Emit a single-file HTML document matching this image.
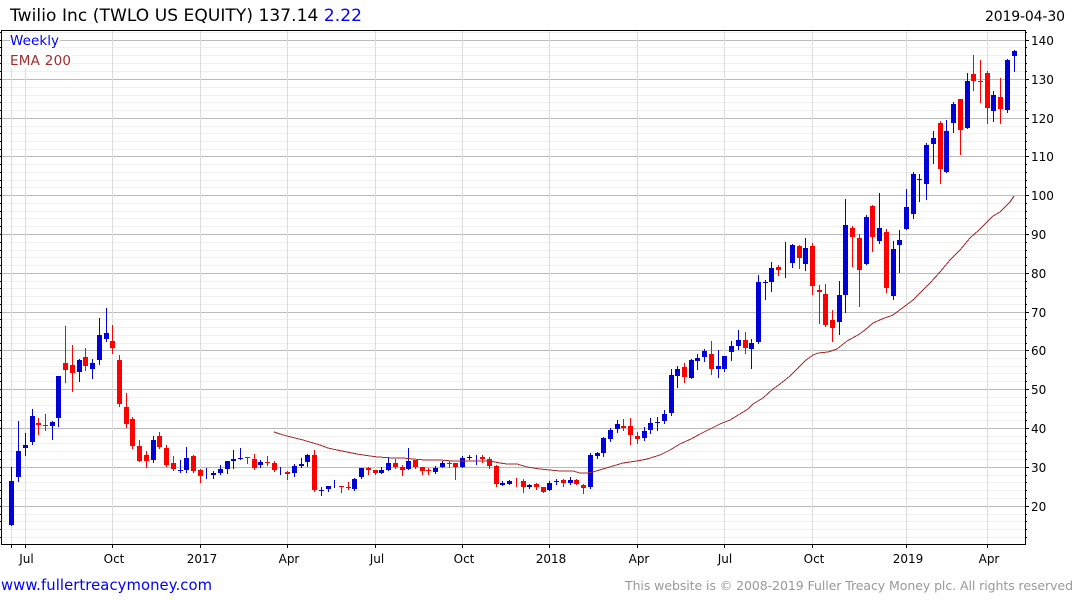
<!DOCTYPE html>
<html><head><meta charset="utf-8"><style>
html,body{margin:0;padding:0;background:#fff;width:1075px;height:600px;overflow:hidden}
svg{display:block}
text{font-family:"DejaVu Sans",sans-serif}
</style></head><body>
<svg width="1075" height="600" viewBox="0 0 1075 600" xmlns="http://www.w3.org/2000/svg">
<g shape-rendering="crispEdges" fill="none">
<path stroke="#f0f0f0" d="M2 32.5H1025M2 47.5H1025M2 55.5H1025M2 63.5H1025M2 71.5H1025M2 87.5H1025M2 95.5H1025M2 102.5H1025M2 110.5H1025M2 126.5H1025M2 133.5H1025M2 141.5H1025M2 149.5H1025M2 164.5H1025M2 172.5H1025M2 180.5H1025M2 187.5H1025M2 203.5H1025M2 211.5H1025M2 218.5H1025M2 226.5H1025M2 242.5H1025M2 250.5H1025M2 257.5H1025M2 265.5H1025M2 281.5H1025M2 288.5H1025M2 296.5H1025M2 304.5H1025M2 319.5H1025M2 327.5H1025M2 335.5H1025M2 343.5H1025M2 358.5H1025M2 366.5H1025M2 373.5H1025M2 381.5H1025M2 397.5H1025M2 405.5H1025M2 412.5H1025M2 420.5H1025M2 436.5H1025M2 443.5H1025M2 451.5H1025M2 459.5H1025M2 475.5H1025M2 482.5H1025M2 490.5H1025M2 498.5H1025M2 514.5H1025M2 521.5H1025M2 529.5H1025M2 537.5H1025"/>
<path stroke="#bbbbbb" d="M2 40.5H1025M2 79.5H1025M2 118.5H1025M2 156.5H1025M2 195.5H1025M2 234.5H1025M2 273.5H1025M2 312.5H1025M2 350.5H1025M2 389.5H1025M2 428.5H1025M2 467.5H1025M2 506.5H1025"/>
<path stroke="#dddddd" d="M11.5 31V544M25.5 31V544M112.5 31V544M200.5 31V544M287.5 31V544M375.5 31V544M462.5 31V544M549.5 31V544M637.5 31V544M724.5 31V544M812.5 31V544M906.5 31V544M987.5 31V544"/>
<rect x="10" y="33" width="50" height="15" fill="#fff"/>
<rect x="10" y="49" width="62" height="19" fill="#fff"/>
<path stroke="#000" d="M1.5 30V545M1 30.5H1026M1 544.5H1026M1025.5 30V545"/>
<path stroke="#000" d="M0 32.5H1M0 40.5H1M0 47.5H1M0 55.5H1M0 63.5H1M0 71.5H1M0 79.5H1M0 87.5H1M0 95.5H1M0 102.5H1M0 110.5H1M0 118.5H1M0 126.5H1M0 133.5H1M0 141.5H1M0 149.5H1M0 156.5H1M0 164.5H1M0 172.5H1M0 180.5H1M0 187.5H1M0 195.5H1M0 203.5H1M0 211.5H1M0 218.5H1M0 226.5H1M0 234.5H1M0 242.5H1M0 250.5H1M0 257.5H1M0 265.5H1M0 273.5H1M0 281.5H1M0 288.5H1M0 296.5H1M0 304.5H1M0 312.5H1M0 319.5H1M0 327.5H1M0 335.5H1M0 343.5H1M0 350.5H1M0 358.5H1M0 366.5H1M0 373.5H1M0 381.5H1M0 389.5H1M0 397.5H1M0 405.5H1M0 412.5H1M0 420.5H1M0 428.5H1M0 436.5H1M0 443.5H1M0 451.5H1M0 459.5H1M0 467.5H1M0 475.5H1M0 482.5H1M0 490.5H1M0 498.5H1M0 506.5H1M0 514.5H1M0 521.5H1M0 529.5H1M0 537.5H1"/>
<path stroke="#000" d="M1026 32.5H1027M1026 47.5H1027M1026 55.5H1027M1026 63.5H1027M1026 71.5H1027M1026 87.5H1027M1026 95.5H1027M1026 102.5H1027M1026 110.5H1027M1026 126.5H1027M1026 133.5H1027M1026 141.5H1027M1026 149.5H1027M1026 164.5H1027M1026 172.5H1027M1026 180.5H1027M1026 187.5H1027M1026 203.5H1027M1026 211.5H1027M1026 218.5H1027M1026 226.5H1027M1026 242.5H1027M1026 250.5H1027M1026 257.5H1027M1026 265.5H1027M1026 281.5H1027M1026 288.5H1027M1026 296.5H1027M1026 304.5H1027M1026 319.5H1027M1026 327.5H1027M1026 335.5H1027M1026 343.5H1027M1026 358.5H1027M1026 366.5H1027M1026 373.5H1027M1026 381.5H1027M1026 397.5H1027M1026 405.5H1027M1026 412.5H1027M1026 420.5H1027M1026 436.5H1027M1026 443.5H1027M1026 451.5H1027M1026 459.5H1027M1026 475.5H1027M1026 482.5H1027M1026 490.5H1027M1026 498.5H1027M1026 514.5H1027M1026 521.5H1027M1026 529.5H1027M1026 537.5H1027M1026 40.5H1029M1026 79.5H1029M1026 118.5H1029M1026 156.5H1029M1026 195.5H1029M1026 234.5H1029M1026 273.5H1029M1026 312.5H1029M1026 350.5H1029M1026 389.5H1029M1026 428.5H1029M1026 467.5H1029M1026 506.5H1029"/>
<path stroke="#000" d="M11.5 545V548M25.5 545V548M112.5 545V548M200.5 545V548M287.5 545V548M375.5 545V548M462.5 545V548M549.5 545V548M637.5 545V548M724.5 545V548M812.5 545V548M906.5 545V548M987.5 545V548"/>
<!-- blue wicks -->
<path stroke="#0000d8" stroke-width="1" d="M11.5 467V526M18.5 421V482M25.5 433V456M32.5 409V445M52.5 421V440M58.5 376V427M79.5 359V382M92.5 359V379M99.5 318V365M106.5 308V342M153.5 436V463M180.5 460V473M186.5 447V473M206.5 468V479M213.5 471V479M220.5 465V475M227.5 461V474M233.5 450V469M240.5 448V460M260.5 460V468M280.5 467V475M294.5 464V477M301.5 458V468M307.5 454V467M321.5 487V496M328.5 486V492M334.5 480V488M354.5 478V491M361.5 468V479M381.5 467V474M388.5 458V471M408.5 448V470M435.5 466V474M442.5 461V468M462.5 456V468M469.5 455V460M476.5 455V465M502.5 481V486M509.5 480V485M529.5 484V489M549.5 481V491M556.5 479V485M570.5 477V485M590.5 453V489M597.5 452V459M603.5 437V457M610.5 428V442M617.5 420V433M644.5 427V441M650.5 418V434M657.5 417V431M664.5 410V424M671.5 369V416M677.5 366V388M691.5 359V379M697.5 354V370M704.5 349V362M718.5 350V378M724.5 356V372M731.5 341V361M738.5 330V350M751.5 339V369M758.5 275V344M765.5 280V300M771.5 262V292M785.5 242V278M792.5 244V268M805.5 238V271M839.5 281V335M845.5 199V313M866.5 215V265M879.5 193V244M893.5 241V300M899.5 230V273M906.5 189V230M913.5 172V219M919.5 174V202M926.5 143V200M933.5 131V164M946.5 120V173M953.5 102V133M967.5 73V129M993.5 91V122M1007.5 59V113M1014.5 50V72"/>
<!-- blue bodies -->
<path stroke="#0000d8" stroke-width="5" d="M11.5 481V525M18.5 451V477M25.5 445V448M32.5 416V442M52.5 422V426M58.5 376V418M79.5 360V372M92.5 363V369M99.5 335V360M106.5 333V339M153.5 440V460M180.5 470V471M186.5 458V470M213.5 473V475M220.5 469V473M227.5 461V469M233.5 459V461M240.5 458V459M260.5 462V465M294.5 466V473M301.5 464V466M307.5 455V462M321.5 490V491M328.5 486V489M354.5 479V489M361.5 468V477M381.5 470V473M388.5 463V470M408.5 461V469M435.5 468V472M442.5 463V467M462.5 458V467M469.5 457V458M502.5 483V485M509.5 481V484M529.5 485V487M549.5 483V490M556.5 481V482M570.5 480V483M590.5 455V487M597.5 453V456M603.5 438V453M610.5 430V439M617.5 424V429M644.5 431V438M650.5 423V430M657.5 422V423M664.5 414V421M671.5 375V413M677.5 369V376M691.5 360V378M697.5 358V361M704.5 351V357M718.5 366V369M724.5 356V369M731.5 346V352M738.5 340V346M751.5 343V349M758.5 282V342M765.5 282V283M771.5 268V282M792.5 245V263M805.5 248V264M839.5 295V322M845.5 225V295M866.5 217V264M879.5 228V241M893.5 249V296M899.5 240V245M906.5 207V229M913.5 174V214M919.5 179V180M926.5 145V184M933.5 138V144M946.5 131V172M953.5 104V123M967.5 81V128M993.5 95V111M1007.5 60V110M1014.5 51V56"/>
<!-- red wicks -->
<path stroke="#ff0000" stroke-width="1" d="M38.5 418V435M45.5 414V431M65.5 326V383M72.5 345V392M85.5 348V371M112.5 325V354M119.5 355V407M126.5 393V428M132.5 417V449M139.5 440V462M146.5 451V468M159.5 432V449M166.5 445V467M173.5 456V471M193.5 455V473M200.5 469V483M247.5 457V464M254.5 454V470M267.5 456V466M274.5 461V472M287.5 471V480M314.5 450V492M341.5 486V493M348.5 482V490M368.5 467V475M375.5 470V475M395.5 459V469M402.5 465V476M415.5 460V469M422.5 467V475M428.5 468V475M449.5 461V468M455.5 463V480M482.5 455V463M489.5 457V469M496.5 465V487M516.5 478V487M523.5 479V493M536.5 483V490M543.5 487V493M563.5 479V487M576.5 479V485M583.5 484V494M623.5 419V431M630.5 418V445M637.5 432V444M684.5 363V383M711.5 341V375M745.5 332V354M778.5 265V276M799.5 245V269M812.5 243V295M819.5 285V324M825.5 284V327M832.5 310V342M852.5 226V267M859.5 234V307M872.5 205V252M886.5 229V293M940.5 121V184M960.5 99V155M973.5 55V91M980.5 60V103M987.5 71V124M1000.5 78V124"/>
<!-- red bodies -->
<path stroke="#ff0000" stroke-width="5" d="M38.5 423V425M45.5 425V426M65.5 363V370M72.5 365V373M85.5 357V366M112.5 341V348M119.5 360V404M126.5 407V424M132.5 419V446M139.5 446V461M146.5 455V461M159.5 436V447M166.5 448V465M173.5 463V469M193.5 456V471M200.5 470V476M247.5 457V458M254.5 459V468M267.5 462V463M274.5 463V470M287.5 472V474M314.5 455V490M341.5 486V487M348.5 487V488M368.5 468V470M375.5 470V473M395.5 463V467M402.5 467V470M415.5 460V467M422.5 467V471M428.5 470V471M449.5 463V464M455.5 463V467M482.5 457V459M489.5 459V466M496.5 466V484M523.5 481V487M536.5 484V487M543.5 487V492M563.5 480V483M576.5 480V484M583.5 485V488M623.5 426V428M630.5 426V435M637.5 436V439M684.5 367V377M711.5 354V369M745.5 340V348M778.5 267V270M799.5 246V258M812.5 246V286M819.5 290V292M825.5 294V325M832.5 320V328M852.5 228V237M859.5 238V270M872.5 206V237M886.5 232V288M940.5 123V169M960.5 99V130M973.5 74V81M980.5 81V82M987.5 73V108M1000.5 97V109"/>
<!-- EMA -->
<polyline stroke="#a52a2a" stroke-width="1" points="274,432 280,434 287,436 295,438 303,440 313,443 320,445 328,448 337,450 347,452 357,454 370,456 378,457 393,458 403,458 413,459 425,460 440,460 452,461 470,461 490,461 500,463 507,464 517,464 527,467 540,469 550,470 560,471 573,471 580,473 587,473 593,472 603,469 613,466 623,463 637,461 647,459 660,455 670,450 680,444 691,439 700,434 710,429 720,424 730,420 748,409 753,404 763,398 773,389 780,384 790,376 800,366 806,360 813,355 818,353 828,352 837,349 847,341 858,335 865,330 873,323 882,319 893,315 905,306 913,300 920,293 930,283 940,272 950,260 960,250 970,238 979,230 985,224 993,216 1000,212 1010,202 1014,196"/>
</g>
<text x="10" y="21" font-size="17" textLength="352" fill="#000">Twilio Inc (TWLO US EQUITY) 137.14 <tspan fill="#0000ff">2.22</tspan></text>
<text x="985" y="21" font-size="14" textLength="80" fill="#000">2019-04-30</text>
<text x="10" y="45" font-size="13.5" textLength="49" fill="#0000ff">Weekly</text>
<text x="10" y="65" font-size="13.5" textLength="61" fill="#a52a2a">EMA 200</text>
<g font-size="12" fill="#000">
<text x="1031" y="45">140</text><text x="1031" y="84">130</text><text x="1031" y="123">120</text><text x="1031" y="161">110</text><text x="1031" y="200">100</text><text x="1031" y="239">90</text><text x="1031" y="278">80</text><text x="1031" y="317">70</text><text x="1031" y="355">60</text><text x="1031" y="394">50</text><text x="1031" y="433">40</text><text x="1031" y="472">30</text><text x="1031" y="511">20</text>
</g>
<g font-size="12" fill="#000" text-anchor="middle">
<text x="26.5" y="563">Jul</text><text x="114" y="563">Oct</text><text x="202" y="563">2017</text><text x="289" y="563">Apr</text><text x="377" y="563">Jul</text><text x="464" y="563">Oct</text><text x="551" y="563">2018</text><text x="639" y="563">Apr</text><text x="725" y="563">Jul</text><text x="814" y="563">Oct</text><text x="908" y="563">2019</text><text x="989" y="563">Apr</text>
</g>
<text x="1" y="590" font-size="14.8" textLength="211" fill="#0000ff">www.fullertreacymoney.com</text>
<text x="625" y="590" font-size="12.5" textLength="448" fill="#999999">This website is © 2008-2019 Fuller Treacy Money plc. All rights reserved</text>
</svg>
</body></html>
